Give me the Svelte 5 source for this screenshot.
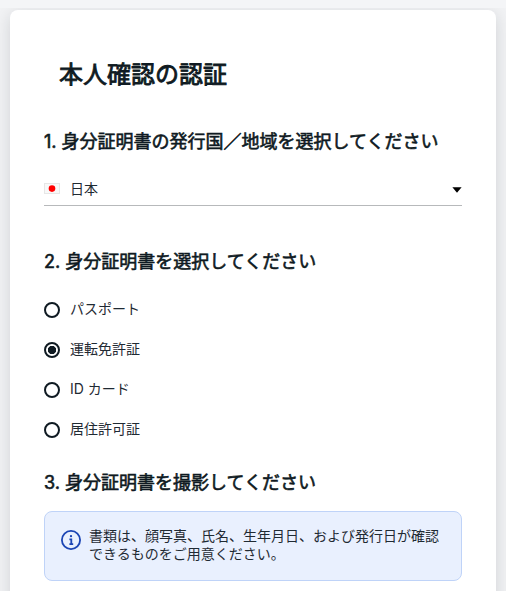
<script>
  let { country = '日本' } = $props();

  let selected = $state('license');

  const documents = [
    { id: 'passport', label: 'パスポート' },
    { id: 'license', label: '運転免許証' },
    { id: 'id-card', label: 'ID カード' },
    { id: 'residence', label: '居住許可証' },
  ];
</script>

<div class="page">
  <main class="card">
    <h1>本人確認の認証</h1>

    <section class="country">
      <h2>1. 身分証明書の発行国／地域を選択してください</h2>
      <button class="select">
        <svg class="flag" viewBox="0 0 16 11" aria-hidden="true">
          <rect x="0.5" y="0.5" width="15" height="10" fill="#f8f8f8" stroke="#e6e6e6" />
          <circle cx="8" cy="5.6" r="3.3" fill="#f00" />
        </svg>
        <span>{country}</span>
        <svg class="caret" viewBox="0 0 10 6" aria-hidden="true">
          <path d="M0.4 0.3h9.2L5 5.7z" />
        </svg>
      </button>
    </section>

    <section class="documents">
      <h2>2. 身分証明書を選択してください</h2>
      <div class="options">
        {#each documents as doc (doc.id)}
          <label class="option">
            <input type="radio" name="document" value={doc.id} bind:group={selected} />
            <span>{doc.label}</span>
          </label>
        {/each}
      </div>
    </section>

    <section class="capture">
      <h2>3. 身分証明書を撮影してください</h2>
      <div class="notice">
        <svg class="info" viewBox="0 0 20 20" aria-hidden="true">
          <circle cx="10" cy="10" r="9.1" />
          <path d="M8.4 9.3h1.9v4.6M8.4 14.1h3.8" />
          <circle class="dot" cx="10" cy="6.2" r="1.15" />
        </svg>
        <p>書類は、顔写真、氏名、生年月日、および発行日が確認できるものをご用意ください。</p>
      </div>
    </section>
  </main>
</div>

<style>
  :global(body) { background: #f4f5f7; }

  .page {
    box-sizing: border-box;
    height: 583px; margin-top: 8px; padding: 2px 10px 0;
    overflow: hidden;
    background: #f1f2f4;
    font-family: Inter, 'Noto Sans CJK JP', sans-serif;
    color: #0f1a22;
  }

  .card {
    box-sizing: border-box;
    height: 640px; padding: 49px 34px 0;
    background: #fff; border-radius: 8px;
    box-shadow: 0 4px 16px rgba(20, 26, 34, 0.14);
  }

  /* medium weight: the CJK face only has regular and bold */
  h1, h2 { font-weight: 400; -webkit-text-stroke: 0.6px currentColor; }
  h1 {
    margin: 0 0 0 15px;
    font-size: 24px; line-height: 32px;
    -webkit-text-stroke-width: 0.85px;
  }
  h2 {
    margin: 0;
    font-size: 18px; line-height: 28px;
    white-space: nowrap;
  }

  .country { margin-top: 37px; }
  .select {
    display: flex; align-items: center; gap: 10px;
    width: 100%; height: 34px; margin-top: 16px; padding: 0;
    border: none; border-bottom: 1px solid #b7b9bb;
    background: none; color: #1f2a33; cursor: pointer;
    font: inherit; font-size: 14px; text-align: left;
  }
  .select span { margin-top: -2px; }
  .flag { width: 16px; height: 11px; }
  .caret {
    width: 10px; height: 6px; margin-left: auto; margin-top: 2px;
    fill: #000;
  }

  .documents { margin-top: 42px; }
  .options {
    display: flex; flex-direction: column; gap: 20px;
    margin-top: 24px;
  }
  .option {
    display: flex; align-items: center; gap: 10px;
    height: 20px; font-size: 14px; line-height: 20px;
    color: #1f2a33; cursor: pointer;
  }
  .option span { margin-top: -2px; }
  .option input {
    appearance: none;
    box-sizing: border-box;
    width: 16px; height: 16px; margin: 0;
    border: 2px solid #0f1a22; border-radius: 50%;
  }
  .option input:checked {
    background: radial-gradient(circle, #0f1a22 0 3.8px, transparent 4.5px);
  }

  .capture { margin-top: 29px; }
  .notice {
    box-sizing: border-box;
    display: flex; align-items: flex-start; gap: 8px;
    height: 70px; margin-top: 14px; padding: 16px;
    border: 1px solid #bfd3f8; border-radius: 8px;
    background: #e9f0fe;
  }
  .notice p {
    flex: 1; margin: -1px 0 0;
    color: #1f2a33;
    font-size: 14px; line-height: 18px;
  }
  .info {
    flex: none; width: 20px; height: 20px; margin-top: 2px;
    fill: none; stroke: #1b45b4; stroke-width: 1.8;
  }
  .info .dot { fill: #1b45b4; stroke: none; }
</style>
